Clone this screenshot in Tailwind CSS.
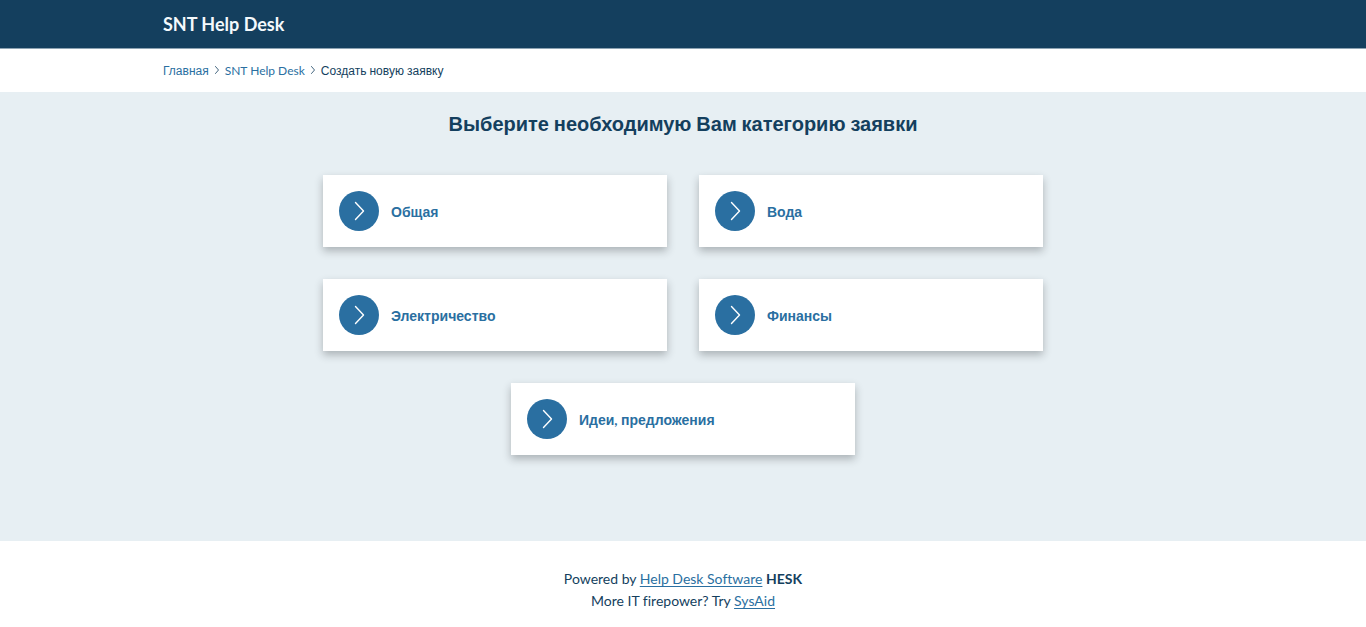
<!DOCTYPE html>
<html lang="ru">
<head>
<meta charset="utf-8">
<meta name="viewport" content="width=device-width, initial-scale=1">
<title>SNT Help Desk</title>
<script src="https://cdn.jsdelivr.net/npm/@tailwindcss/browser@4"></script>
</head>
<body class="flex min-h-screen flex-col bg-white font-['Lato',sans-serif] text-sm text-[#143f5e]">
<svg class="hidden" aria-hidden="true">
  <symbol id="chevron" viewBox="0 0 20 20"><path d="M6.5 1.5 L14.5 10 L6.5 18.5" fill="none" stroke="currentColor" stroke-width="1.4" stroke-linecap="round" stroke-linejoin="round"/></symbol>
  <symbol id="chevron-small" viewBox="0 0 8 8"><path d="M2.5 0.5 L5.5 4 L2.5 7.5" fill="none" stroke="currentColor" stroke-width="0.8" stroke-linecap="round" stroke-linejoin="round"/></symbol>
</svg>
<header class="bg-[#143f5e]">
  <div class="mx-auto flex h-12 max-w-[1040px] items-center">
    <a href="#" class="text-lg font-bold text-[#f4f9fc]">SNT Help Desk</a>
  </div>
</header>
<nav class="border-t border-[#8da3b3]" aria-label="Breadcrumb">
  <div class="mx-auto flex h-[43px] max-w-[1040px] items-center text-xs">
    <a href="#" class="font-['Liberation_Sans',sans-serif] text-[#2a6fa1]">Главная</a>
    <svg class="mx-1 mb-0.5 size-2"><use href="#chevron-small"/></svg>
    <a href="#" class="text-[#2a6fa1]">SNT Help Desk</a>
    <svg class="mx-1 mb-0.5 size-2"><use href="#chevron-small"/></svg>
    <span><span class="font-['Liberation_Sans',sans-serif]">Создать</span> <span class="font-['Liberation_Sans',sans-serif]">новую</span> <span class="font-['Liberation_Sans',sans-serif]">заявку</span></span>
  </div>
</nav>
<main class="grow bg-[#e7eff3] px-4 pt-[15px] pb-4">
  <h1 class="text-center text-xl leading-8 font-bold"><span class="font-['Liberation_Sans',sans-serif]">Выберите</span> <span class="font-['Liberation_Sans',sans-serif]">необходимую</span> <span class="font-['Liberation_Sans',sans-serif]">Вам</span> <span class="font-['Liberation_Sans',sans-serif]">категорию</span> <span class="font-['Liberation_Sans',sans-serif]">заявки</span></h1>
  <div class="mx-auto mt-[35px] flex max-w-[720px] flex-wrap justify-center gap-8 font-['Liberation_Sans',sans-serif]">
    <a href="#" class="flex h-[72px] w-[344px] items-center gap-3 bg-white px-4 font-bold text-[#2a6fa1] shadow-[0_4px_8px_0_rgba(38,40,42,0.3)]"><span class="flex size-10 items-center justify-center rounded-full bg-[#2a6fa1] text-white"><svg class="size-5"><use href="#chevron"/></svg></span><span class="pt-0.5">Общая</span></a>
    <a href="#" class="flex h-[72px] w-[344px] items-center gap-3 bg-white px-4 font-bold text-[#2a6fa1] shadow-[0_4px_8px_0_rgba(38,40,42,0.3)]"><span class="flex size-10 items-center justify-center rounded-full bg-[#2a6fa1] text-white"><svg class="size-5"><use href="#chevron"/></svg></span><span class="pt-0.5">Вода</span></a>
    <a href="#" class="flex h-[72px] w-[344px] items-center gap-3 bg-white px-4 font-bold text-[#2a6fa1] shadow-[0_4px_8px_0_rgba(38,40,42,0.3)]"><span class="flex size-10 items-center justify-center rounded-full bg-[#2a6fa1] text-white"><svg class="size-5"><use href="#chevron"/></svg></span><span class="pt-0.5">Электричество</span></a>
    <a href="#" class="flex h-[72px] w-[344px] items-center gap-3 bg-white px-4 font-bold text-[#2a6fa1] shadow-[0_4px_8px_0_rgba(38,40,42,0.3)]"><span class="flex size-10 items-center justify-center rounded-full bg-[#2a6fa1] text-white"><svg class="size-5"><use href="#chevron"/></svg></span><span class="pt-0.5">Финансы</span></a>
    <a href="#" class="flex h-[72px] w-[344px] items-center gap-3 bg-white px-4 font-bold text-[#2a6fa1] shadow-[0_4px_8px_0_rgba(38,40,42,0.3)]"><span class="flex size-10 items-center justify-center rounded-full bg-[#2a6fa1] text-white"><svg class="size-5"><use href="#chevron"/></svg></span><span class="pt-0.5 font-['Lato',sans-serif]"><span class="font-['Liberation_Sans',sans-serif]">Идеи</span>, <span class="font-['Liberation_Sans',sans-serif]">предложения</span></span></a>
  </div>
</main>
<footer class="pt-[27px] pb-[15px] text-center leading-[22px] [font-variant-ligatures:no-common-ligatures]">
  <p>Powered by <a href="#" class="text-[#2a6fa1] underline decoration-1 underline-offset-2">Help Desk Software</a> <b>HESK</b></p>
  <p>More IT firepower? Try <a href="#" class="text-[#2a6fa1] underline decoration-1 underline-offset-2">SysAid</a></p>
</footer>
</body>
</html>
